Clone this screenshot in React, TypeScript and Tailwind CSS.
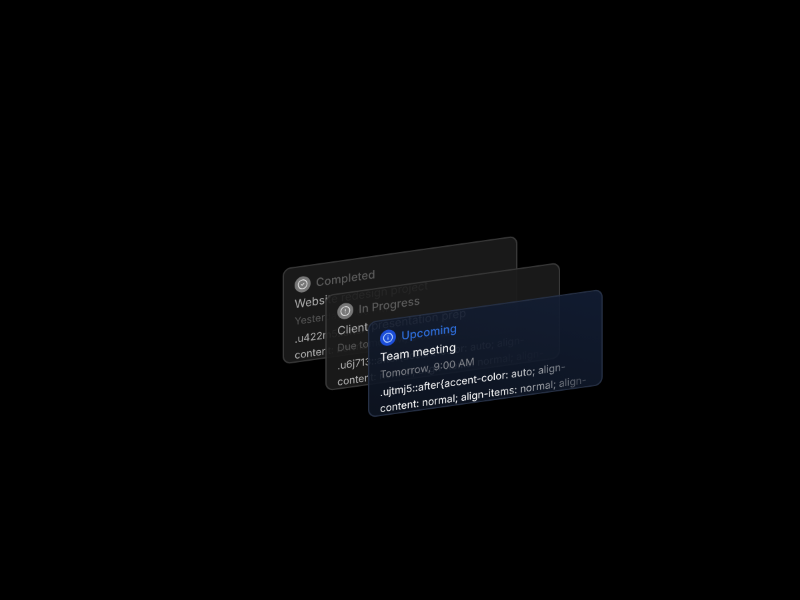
import { CircleCheck, CircleAlert, Info } from "lucide-react";
import type { ReactNode } from "react";

function Card({ cls, icon, iconBg, titleCls, headCls, subCls, codeCls, title, head, sub, code }: {
  cls: string; icon: ReactNode; iconBg: string; titleCls: string; headCls: string; subCls: string; codeCls: string; title: string; head: string; sub: string; code: string;
}) {
  return (
    <div className={`relative flex h-36 w-[352px] -skew-y-[8deg] flex-col rounded-xl border-2 px-4 py-3 ${cls}`}>
      <div className="flex h-7 shrink-0 items-center gap-2">
        <span className={`flex size-6 items-center justify-center rounded-full ${iconBg}`}>{icon}</span>
        <p className={`text-[17px] leading-7 font-medium ${titleCls}`}>{title}</p>
      </div>
      <p className={`shrink-0 whitespace-nowrap text-[17px] leading-7 ${headCls}`}>{head}</p>
      <p className={`shrink-0 whitespace-nowrap text-[15.2px] leading-6 ${subCls}`}>{sub}</p>
      <p className={`mt-[3px] shrink-0 text-[15.2px] leading-6 [mask-image:linear-gradient(to_right,#000_55%,rgba(0,0,0,0.22)_96%)] ${codeCls}`}>
        {code}
      </p>
    </div>
  );
}

const grayCard = "border-[#383838] bg-[#1b1b1b]/92";

export default function App() {
  return (
    <div className="flex h-screen w-full items-center justify-center overflow-hidden bg-black [font-family:Inter,sans-serif]">
      <div className="grid scale-[0.667] [will-change:transform,scale] [grid-template-areas:'stack'] place-items-center">
        <div className="[grid-area:stack]">
          <Card
            cls={grayCard}
            iconBg="bg-[#777777]"
            icon={<CircleCheck className="size-4 text-[#e5e5e5]" />}
            titleCls="text-[#5c5c5c]"
            headCls="text-[#b0b0b0]"
            subCls="text-[#565656]"
            codeCls="text-[#b8b8b8]"
            title="Completed"
            head="Website redesign project"
            sub="Yesterday, 5:00 PM"
            code=".u422m5::after{accent-color: auto; align-content: normal; align-items: normal; align-"
          />
        </div>
        <div className="[grid-area:stack] translate-x-16 translate-y-10">
          <Card
            cls={grayCard}
            iconBg="bg-[#777777]"
            icon={<CircleAlert className="size-4 text-[#e5e5e5]" />}
            titleCls="text-[#5c5c5c]"
            headCls="text-[#b0b0b0]"
            subCls="text-[#565656]"
            codeCls="text-[#b8b8b8]"
            title="In Progress"
            head="Client presentation prep"
            sub="Due tomorrow, 5:00 PM"
            code=".u6j713::after{accent-color: auto; align-content: normal; align-items: normal; align-"
          />
        </div>
        <div className="[grid-area:stack] translate-x-32 translate-y-20">
          <Card
            cls="border-[#263045] bg-gradient-to-tr from-[#0e1522e6] to-[#131e35e6]"
            iconBg="bg-[#1d4ed8]"
            icon={<Info className="size-4 text-[#bfdbfe]" />}
            titleCls="text-[#2f6fdc]"
            headCls="text-white"
            subCls="text-[#85878d]"
            codeCls="text-white"
            title="Upcoming"
            head="Team meeting"
            sub="Tomorrow, 9:00 AM"
            code=".ujtmj5::after{accent-color: auto; align-content: normal; align-items: normal; align-"
          />
        </div>
      </div>
    </div>
  );
}
